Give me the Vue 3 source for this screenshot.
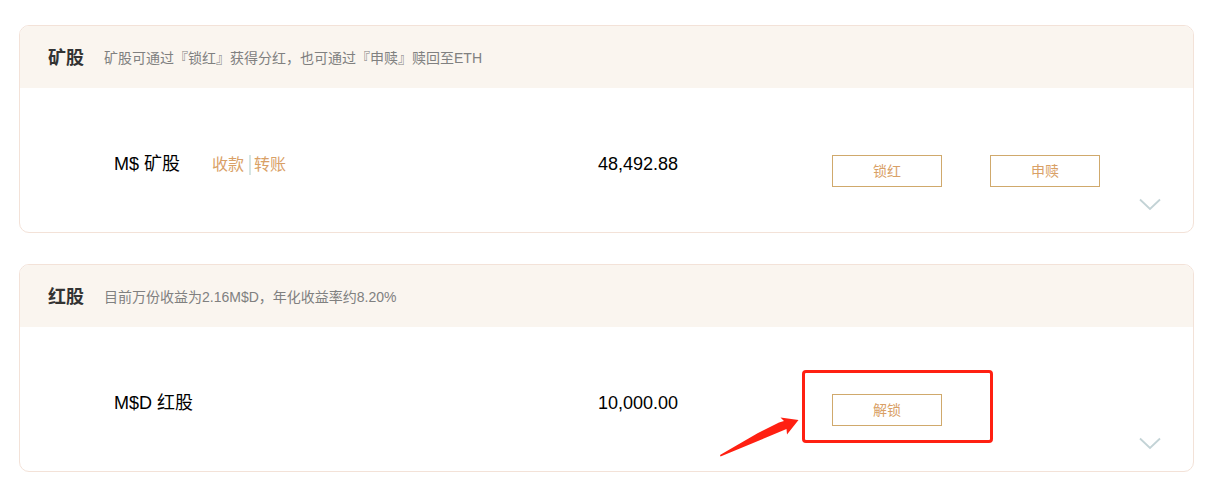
<script setup>
const cards = [
  {
    title: '矿股',
    note: '矿股可通过『锁红』获得分红，也可通过『申赎』赎回至ETH',
    name: 'M$ 矿股',
    links: ['收款', '转账'],
    amount: '48,492.88',
    actions: ['锁红', '申赎'],
    marked: false
  },
  {
    title: '红股',
    note: '目前万份收益为2.16M$D，年化收益率约8.20%',
    name: 'M$D 红股',
    links: [],
    amount: '10,000.00',
    actions: ['解锁'],
    marked: true
  }
]
</script>

<template>
  <main class="page">
    <section v-for="card in cards" :key="card.title" class="card">
      <header class="head">
        <h2 class="title">{{ card.title }}</h2>
        <p class="note">{{ card.note }}</p>
      </header>
      <div class="body">
        <div class="asset">
          <span>{{ card.name }}</span>
          <nav v-if="card.links.length" class="links">
            <a v-for="link in card.links" :key="link" class="link" href="#">{{ link }}</a>
          </nav>
        </div>
        <div class="amount">{{ card.amount }}</div>
        <div class="actions">
          <button v-for="action in card.actions" :key="action" class="action" type="button">{{ action }}</button>
          <div v-if="card.marked" class="marker"></div>
          <svg v-if="card.marked" class="arrow" width="80" height="40" viewBox="0 0 80 40" aria-hidden="true">
            <path d="M0 38 L38 16 L59 5.5 L64 4 L60.5 0.5 L78.5 3 L67 17.5 L66.5 12 L0.5 39.5 Z" fill="#ff2012" />
          </svg>
        </div>
        <button class="toggle" type="button" aria-label="展开">
          <svg width="22" height="14" viewBox="0 0 22 14" aria-hidden="true">
            <path d="M1 1.5 L11 11 L21 1.5" fill="none" stroke="#c3d3d6" stroke-width="1.8" />
          </svg>
        </button>
      </div>
    </section>
  </main>
</template>

<style>
body {
  background: #fff;
}
</style>

<style scoped>
.page {
  display: flex;
  flex-direction: column;
  gap: 31px;
  padding: 25px 25px 25px 19px;
  font-family: "Liberation Sans", Arial, "Noto Sans CJK SC", sans-serif;
  color: #000;
}
.card {
  border: 1px solid #f3e2d8;
  border-radius: 10px;
  overflow: hidden;
}
.head {
  display: flex;
  align-items: center;
  gap: 20px;
  height: 62px;
  box-sizing: border-box;
  padding: 2px 28px 0;
  background: #faf5ef;
}
.title {
  margin: 0;
  font-size: 18px;
  line-height: 24px;
  font-weight: 700;
  color: #333;
}
.note {
  margin: 0;
  font-size: 14px;
  line-height: 20px;
  color: #808080;
}
.body {
  position: relative;
  display: grid;
  grid-template-columns: 484fr 234fr 361fr;
  align-items: start;
  height: 144px;
  box-sizing: border-box;
  padding: 64px 0 0 94px;
  font-size: 18px;
  line-height: 24px;
}
.asset {
  display: flex;
  gap: 32px;
}
.links {
  display: flex;
  align-items: center;
  padding-top: 2px;
}
.link {
  font-size: 16px;
  line-height: 20px;
  color: #d9a066;
  text-decoration: none;
}
.link + .link {
  margin-left: 5px;
  padding-left: 3px;
  border-left: 2px solid #d5e5e3;
}
.actions {
  position: relative;
  display: flex;
  gap: 48px;
  padding-top: 3px;
}
.action {
  width: 110px;
  height: 32px;
  padding: 0;
  border: 1px solid #d0a96c;
  background: #fff;
  color: #d9a066;
  font-family: inherit;
  font-size: 14px;
  line-height: 20px;
}
.marker {
  position: absolute;
  top: -21px;
  left: -30px;
  width: 191px;
  height: 73px;
  box-sizing: border-box;
  border: 3px solid #ff2012;
  border-radius: 4px;
  pointer-events: none;
}
.arrow {
  position: absolute;
  top: 26px;
  left: -112px;
  pointer-events: none;
}
.toggle {
  position: absolute;
  right: 32px;
  bottom: 20px;
  display: flex;
  padding: 0;
  border: 0;
  background: none;
}
</style>
